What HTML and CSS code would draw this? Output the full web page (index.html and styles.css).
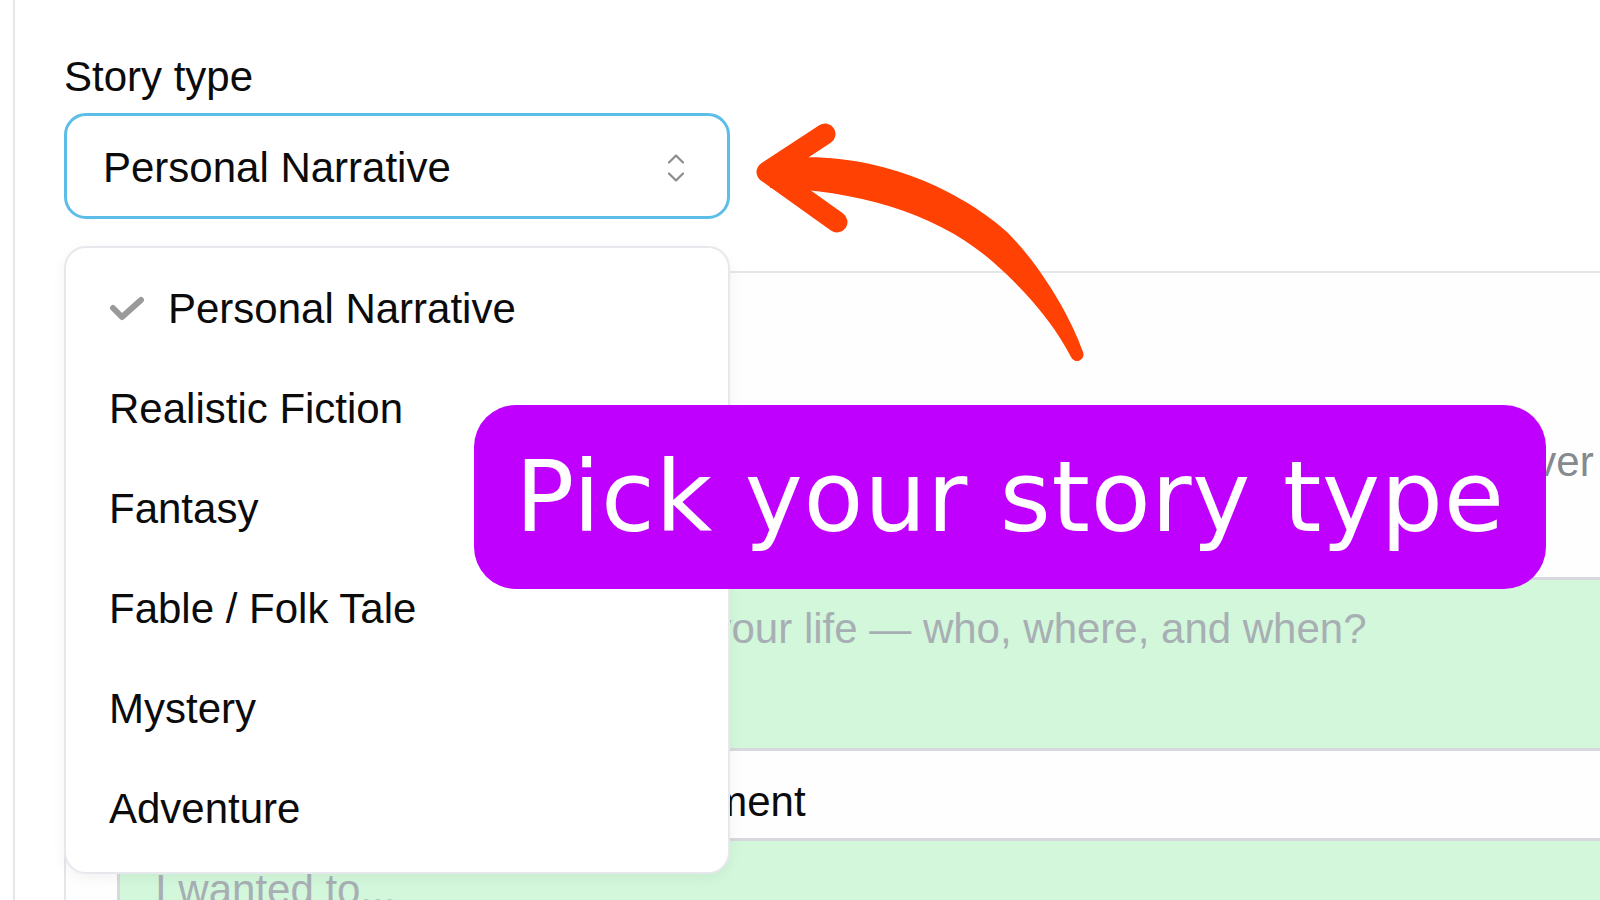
FILE: index.html
```html
<!DOCTYPE html>
<html lang="en">
<head>
<meta charset="utf-8">
<title>Story type</title>
<link rel="stylesheet" href="styles.css">
</head>
<body>
  <div class="page">
    <label class="field-label">Story type</label>
    <div class="field">
      <div class="select">
        <span class="select-value">Personal Narrative</span>
        <svg class="chevrons" width="20" height="32" viewBox="0 0 20 32" aria-hidden="true">
          <path d="M3 10.5 L10 3.5 L17 10.5" />
          <path d="M3 21.5 L10 28.5 L17 21.5" />
        </svg>
      </div>
      <ul class="menu">
        <li class="menu-item selected">
          <svg class="check" width="36" height="26" viewBox="0 0 36 26" aria-hidden="true">
            <path d="M4 12 L13 21 L32 4" />
          </svg>
          <span>Personal Narrative</span>
        </li>
        <li class="menu-item">Realistic Fiction</li>
        <li class="menu-item">Fantasy</li>
        <li class="menu-item">Fable / Folk Tale</li>
        <li class="menu-item">Mystery</li>
        <li class="menu-item">Adventure</li>
      </ul>
    </div>

    <section class="card">
      <h2 class="card-title">Beginning</h2>
      <p class="hint">Write about a true moment from your own life. It can be small, silly, or whatever you like.</p>
      <div class="prompt-label">Setting</div>
      <div class="textbox"><span class="placeholder">Describe a true moment from your life — who, where, and when?</span></div>
      <div class="prompt-label">The Problem – My Big Disagreement</div>
      <div class="textbox"><span class="placeholder">I wanted to...</span></div>
    </section>
  </div>

  <svg class="arrow" width="360" height="260" viewBox="740 115 360 260" aria-hidden="true">
    <path class="arrow-shaft" d="M770 160 C870 146 960 190 1007 232 C1040 265 1070 315 1083 352 A6 6 0 0 1 1071 357 C1055 325 1025 290 993 262 C940 215 860 190 770 188 Z" />
    <path class="arrow-head" d="M825 134 L767 172 L837 222" />
  </svg>

  <div class="callout">Pick your story type</div>
</body>
</html>
```

FILE: styles.css
```css
* {
  box-sizing: border-box;
}

html, body {
  margin: 0;
  padding: 0;
}

body {
  position: relative;
  width: 1600px;
  height: 900px;
  overflow: hidden;
  background: #ffffff;
  font-family: "Liberation Sans", Arial, sans-serif;
  color: #0b0b0b;
}

.page {
  margin-left: 13px;
  height: 900px;
  border-left: 2px solid #e4e6ea;
  padding: 52px 0 0 49px;
  overflow: hidden;
}

.field-label {
  display: block;
  font-size: 42px;
  line-height: 50px;
}

.field {
  position: relative;
  width: 666px;
  margin-top: 11px;
}

.select {
  display: flex;
  align-items: center;
  justify-content: space-between;
  height: 106px;
  border: 3px solid #5cbde9;
  border-radius: 22px;
  padding: 3px 41px 0 36px;
  background: #fff;
}

.select-value {
  font-size: 42px;
  line-height: 50px;
}

.chevrons path {
  fill: none;
  stroke: #8c8c8c;
  stroke-width: 2.2;
  stroke-linecap: round;
  stroke-linejoin: round;
}

.menu {
  position: absolute;
  top: calc(100% + 27px);
  left: 0;
  z-index: 5;
  width: 666px;
  margin: 0;
  padding: 11px 0 13px;
  list-style: none;
  background: #fff;
  border: 2px solid #e6e8eb;
  border-radius: 22px;
  box-shadow: 0 4px 14px rgba(0, 0, 0, 0.05);
}

.menu-item {
  display: flex;
  align-items: center;
  gap: 23px;
  height: 100px;
  padding-left: 43px;
  font-size: 42px;
  line-height: 50px;
}

.check path {
  fill: none;
  stroke: #9a9a9a;
  stroke-width: 6;
  stroke-linecap: round;
  stroke-linejoin: round;
}

.card {
  margin-top: 52px;
  margin-right: -200px;
  padding: 40px 0 0 51px;
  height: 700px;
  border: 2px solid #e4e6ea;
  border-radius: 22px;
  background: #fefefe;
}

.card-title {
  margin: 0;
  font-size: 42px;
  line-height: 50px;
  font-weight: 700;
}

.hint {
  margin: 74px 0 0;
  padding-left: 10px;
  font-size: 42px;
  line-height: 50px;
  color: #858a8f;
  white-space: nowrap;
}

.prompt-label {
  margin: 29px 0 11px;
  font-size: 42px;
  line-height: 50px;
  white-space: nowrap;
}

.prompt-label + .textbox + .prompt-label {
  margin-top: 26px;
}

.textbox {
  height: 174px;
  border: 3px solid #d6d8dc;
  border-radius: 12px;
  background: #d2f7da;
  padding: 24px 0 0 35px;
}

.placeholder {
  display: block;
  font-size: 42px;
  line-height: 50px;
  color: #a8afb4;
  white-space: nowrap;
}

.arrow {
  position: absolute;
  left: 740px;
  top: 115px;
  z-index: 10;
}

.arrow-shaft {
  fill: #ff4103;
}

.arrow-head {
  fill: none;
  stroke: #ff4103;
  stroke-width: 21;
  stroke-linecap: round;
  stroke-linejoin: round;
}

.callout {
  position: absolute;
  left: 474px;
  top: 405px;
  z-index: 20;
  display: flex;
  align-items: center;
  justify-content: center;
  width: 1072px;
  height: 184px;
  border-radius: 42px;
  background: #bf00ff;
  color: #ffffff;
  font-family: "DejaVu Sans", "Noto Sans", sans-serif;
  font-size: 98px;
  letter-spacing: 0.7px;
  padding-bottom: 1px;
}
```
